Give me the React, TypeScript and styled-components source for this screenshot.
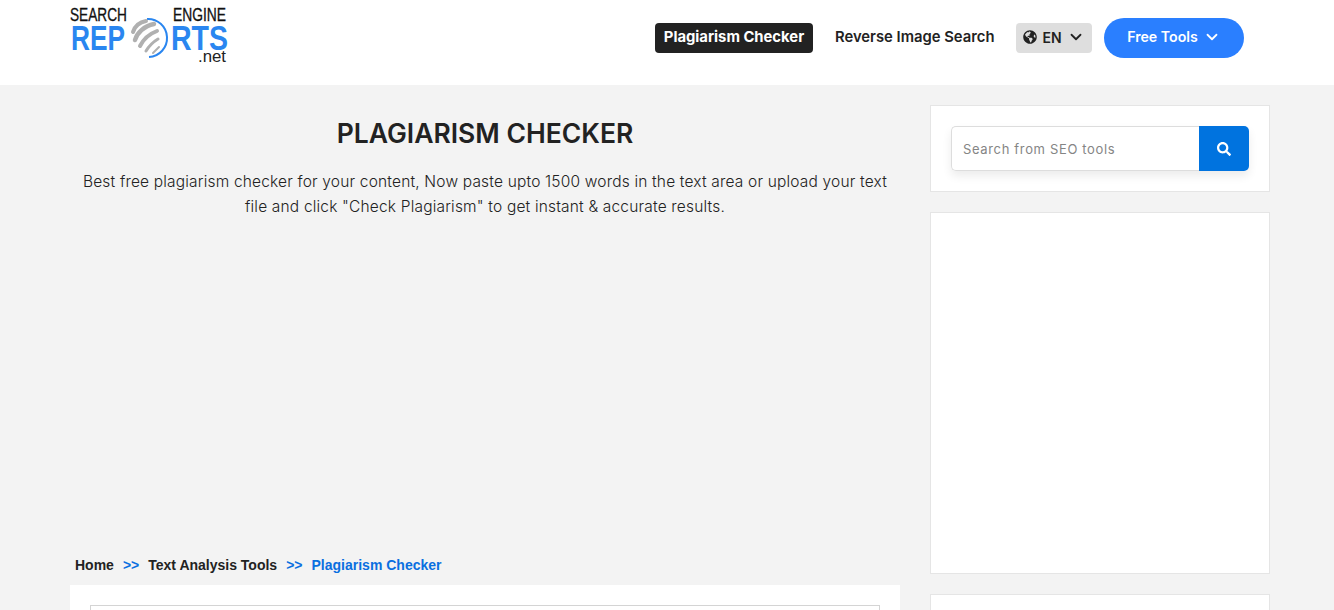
import React from "react";
import styled, { createGlobalStyle } from "styled-components";
import { FaGlobeAmericas, FaSearch } from "react-icons/fa";
import { ChevronDown } from "lucide-react";

const Global = createGlobalStyle`
  html, body {
    margin: 0;
    padding: 0;
    height: 610px;
    overflow: hidden;
    background: #f3f3f3;
    font-family: Inter, "Open Sans", sans-serif;
  }
  * { box-sizing: border-box; }
`;

function Logo() {
  return (
    <LogoSvg viewBox="0 0 170 70" width="170" height="70" role="img" aria-label="Search Engine Reports">
      <text x="0" y="21" fontFamily="Liberation Sans, sans-serif" fontSize="17.5" stroke="#111" strokeWidth="0.3" fill="#111" textLength="57" lengthAdjust="spacingAndGlyphs">SEARCH</text>
      <text x="103" y="21" fontFamily="Liberation Sans, sans-serif" fontSize="17.5" stroke="#111" strokeWidth="0.3" fill="#111" textLength="53" lengthAdjust="spacingAndGlyphs">ENGINE</text>
      <text x="1" y="50" fontFamily="Liberation Sans, sans-serif" fontWeight="bold" fontSize="35" fill="#2a86f0" textLength="54" lengthAdjust="spacingAndGlyphs">REP</text>
      <text x="101" y="50" fontFamily="Liberation Sans, sans-serif" fontWeight="bold" fontSize="35" fill="#2a86f0" textLength="57" lengthAdjust="spacingAndGlyphs">RTS</text>
      <text x="128" y="62" fontFamily="Liberation Sans, sans-serif" fontSize="16" fill="#222" textLength="28" lengthAdjust="spacingAndGlyphs">.net</text>
      <path d="M77 19 A19 19 0 1 1 79 57" fill="none" stroke="#2a86f0" strokeWidth="2" />
      <g fill="none" stroke="#b0b0b0" strokeLinecap="round">
        <path d="M63 32 C65 26 70 22 76 21" strokeWidth="4" />
        <path d="M65 40 C67 33 74 26 84 24" strokeWidth="4.5" />
        <path d="M70 46 C73 40 79 34 87 31" strokeWidth="4" />
        <path d="M76 51 C79 46 83 42 88 39" strokeWidth="3" />
        <path d="M83 53 C85 51 87 49 89 47" strokeWidth="2" />
      </g>
    </LogoSvg>
  );
}

export default function App() {
  return (
    <>
      <Global />
      <Header>
        <HeaderInner>
          <Logo />
          <Nav>
            <ActiveLink>Plagiarism Checker</ActiveLink>
            <NavLink>Reverse Image Search</NavLink>
            <LangButton>
              <FaGlobeAmericas size={14} />
              EN
              <ChevronDown size={18} strokeWidth={2.4} />
            </LangButton>
            <ToolsButton>
              Free Tools
              <ChevronDown size={18} strokeWidth={2.4} />
            </ToolsButton>
          </Nav>
        </HeaderInner>
      </Header>
      <Page>
        <Main>
          <Title>PLAGIARISM CHECKER</Title>
          <Intro>
            Best free plagiarism checker for your content, Now paste upto 1500 words in the text area or upload your text
            file and click "Check Plagiarism" to get instant &amp; accurate results.
          </Intro>
          <Breadcrumb>
            <Crumb>Home</Crumb>
            <Sep>&gt;&gt;</Sep>
            <Crumb>Text Analysis Tools</Crumb>
            <Sep>&gt;&gt;</Sep>
            <Crumb current>Plagiarism Checker</Crumb>
          </Breadcrumb>
          <ToolCard>
            <TextBox />
          </ToolCard>
        </Main>
        <Side>
          <SearchCard>
            <SearchBox>
              <SearchInput placeholder="Search from SEO tools" />
              <SearchButton aria-label="Search">
                <FaSearch size={14} />
              </SearchButton>
            </SearchBox>
          </SearchCard>
          <AdCard />
          <AdCard />
        </Side>
      </Page>
    </>
  );
}

const Header = styled.header`
  height: 85px;
  background: #fff;
`;
const HeaderInner = styled.div`
  width: 1200px;
  height: 85px;
  margin-left: 70px;
  display: flex;
  align-items: flex-start;
  justify-content: space-between;
  padding-right: 26px;
`;
const LogoSvg = styled.svg`
  display: block;
`;
const Nav = styled.nav`
  display: flex;
  align-items: center;
  height: 40px;
  margin-top: 18px;
`;
const ActiveLink = styled.a`
  width: 158px;
  height: 30px;
  display: flex;
  align-items: center;
  justify-content: center;
  padding-bottom: 2px;
  background: #222;
  color: #fff;
  border-radius: 4px;
  font-size: 14.8px;
  font-weight: 700;
`;
const NavLink = styled.a`
  width: 159px;
  margin: 0 22px;
  padding-bottom: 2px;
  color: #222;
  font-size: 14.8px;
  font-weight: 600;
  white-space: nowrap;
`;
const LangButton = styled.button`
  width: 76px;
  height: 30px;
  display: flex;
  align-items: center;
  justify-content: center;
  gap: 5px;
  margin-right: 12px;
  padding: 0 0 2px;
  border: 0;
  border-radius: 4px;
  background: #dedede;
  color: #222;
  font: 600 14px Inter, sans-serif;
`;
const ToolsButton = styled.button`
  width: 140px;
  height: 40px;
  display: flex;
  align-items: center;
  justify-content: center;
  gap: 5px;
  padding: 0 0 3px;
  border: 0;
  border-radius: 20px;
  background: #2a7fff;
  color: #fff;
  font: 600 14.2px Inter, sans-serif;
`;
const Page = styled.div`
  width: 1200px;
  margin-left: 70px;
  display: flex;
  justify-content: space-between;
  padding-top: 20px;
`;
const Main = styled.main`
  width: 830px;
`;
const Title = styled.h1`
  margin: 10px 0 0;
  text-align: center;
  color: #222;
  font-size: 26.5px;
  font-weight: 600;
  line-height: 36px;
`;
const Intro = styled.p`
  margin: 18px 0 0;
  padding: 0 5px;
  text-align: center;
  color: #222;
  font-size: 15.5px;
  font-weight: 300;
  letter-spacing: 0.18px;
  line-height: 25px;
`;
const Breadcrumb = styled.div`
  display: flex;
  align-items: center;
  margin-top: 336px;
  padding-left: 5px;
  height: 20px;
  font: bold 14px "Liberation Sans", Arial, sans-serif;
`;
const Crumb = styled.span<{ current?: boolean }>`
  color: ${(p) => (p.current ? "#0a6fe0" : "#222")};
`;
const Sep = styled.span`
  margin: 0 9px;
  color: #0a6fe0;
`;
const ToolCard = styled.section`
  margin-top: 10px;
  padding: 20px;
  height: 200px;
  background: #fff;
`;
const TextBox = styled.div`
  height: 160px;
  border: 1px solid #d4d4d4;
`;
const Side = styled.aside`
  width: 340px;
  display: flex;
  flex-direction: column;
  gap: 20px;
`;
const SearchCard = styled.div`
  height: 87px;
  padding: 20px;
  background: #fff;
  border: 1px solid #e5e5e5;
`;
const SearchBox = styled.div`
  display: flex;
  height: 45px;
  border-radius: 5px;
  box-shadow: 0 5px 10px rgba(0, 0, 0, 0.08);
`;
const SearchInput = styled.input`
  flex: 1;
  min-width: 0;
  padding: 0 11px;
  background: #fff;
  border: 1px solid #ddd;
  border-right: 0;
  border-radius: 5px 0 0 5px;
  outline: none;
  font: 400 13px Inter, sans-serif;
  letter-spacing: 0.65px;
  &::placeholder { color: #858585; opacity: 1; }
`;
const SearchButton = styled.button`
  width: 50px;
  display: flex;
  align-items: center;
  justify-content: center;
  padding: 0;
  border: 0;
  border-radius: 0 5px 5px 0;
  background: #0073df;
  color: #fff;
`;
const AdCard = styled.div`
  height: 362px;
  flex: none;
  background: #fff;
  border: 1px solid #e5e5e5;
`;
